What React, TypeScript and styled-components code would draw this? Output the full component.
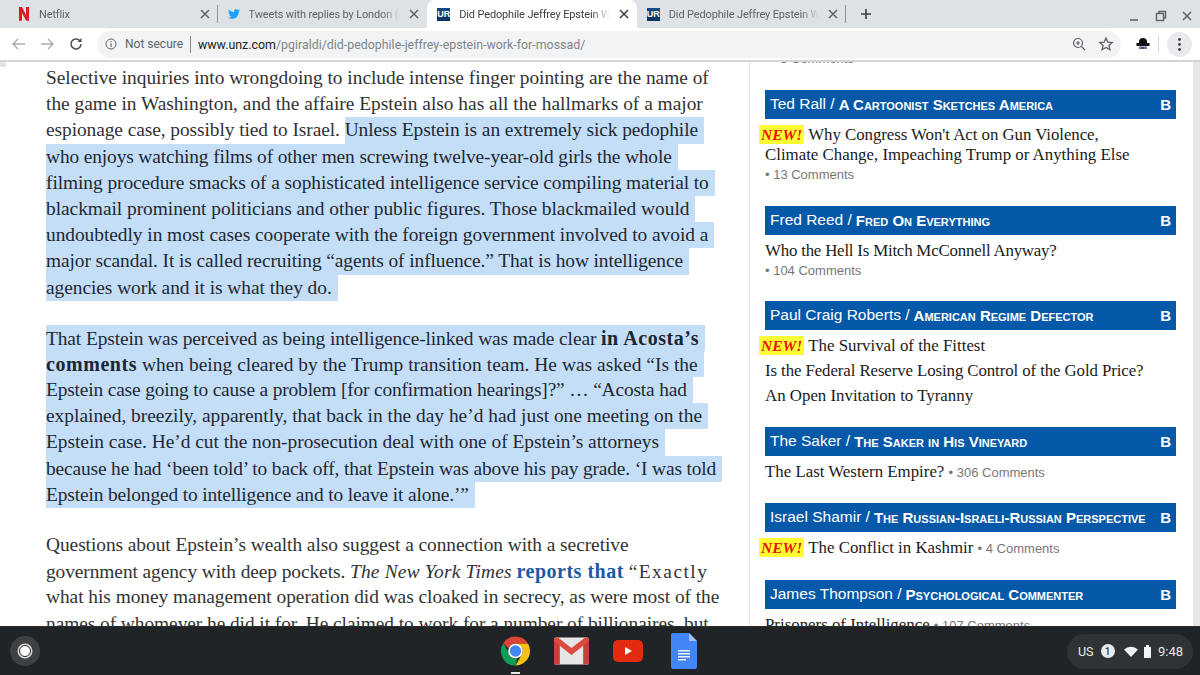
import React from "react";
import styled, { createGlobalStyle } from "styled-components";
import { FaTwitter } from "react-icons/fa";

const Global = createGlobalStyle`
  html, body { margin: 0; padding: 0; width: 1200px; height: 675px; overflow: hidden; background: #fff; }
  * { box-sizing: border-box; }
`;

const Screen = styled.div`
  width: 1200px; height: 675px; display: flex; flex-direction: column; overflow: hidden;
  font-family: Roboto, "Liberation Sans", sans-serif;
`;
const TabStrip = styled.div`
  height: 28px; flex: none; background: #dee1e6; display: flex; align-items: center; padding-left: 8px;
`;
const Tab = styled.div<{ $active?: boolean; $divider?: boolean }>`
  width: 209.6px; height: 28px; display: flex; align-items: center; padding: 0 8px 0 10px; gap: 9px;
  position: relative; flex: none;
  background: ${p => (p.$active ? "#fff" : "transparent")};
  border-radius: ${p => (p.$active ? "8px 8px 0 0" : "0")};
  color: ${p => (p.$active ? "#3c4043" : "#5f6368")};
  ${p => p.$divider && `&::after { content: ""; position: absolute; right: 0; top: 5px; width: 1px; height: 18px; background: #8f9498; }`}
`;
const TabTitle = styled.span`
  flex: 1; min-width: 0; font-size: 11px; white-space: nowrap; overflow: hidden; letter-spacing: -0.14px;
  -webkit-mask-image: linear-gradient(to right, #000 88%, transparent 100%);
  mask-image: linear-gradient(to right, #000 88%, transparent 100%);
`;
const Favicon = styled.span`
  width: 12px; height: 14px; flex: none; display: flex; align-items: center; justify-content: center;
`;
const UrIcon = styled.span`
  width: 13px; height: 13px; flex: none; background: linear-gradient(#144c86, #0c3560); color: #fff;
  font: bold 9px "Liberation Sans", sans-serif; display: flex; align-items: center; justify-content: center;
`;
const NewTab = styled.span`
  margin-left: 14px; display: flex;
`;
const WindowControls = styled.div`
  margin-left: auto; display: flex; align-items: center; gap: 15px; padding: 4px 8px 0 0;
`;
const Toolbar = styled.div`
  height: 34px; flex: none; background: #fff; display: flex; align-items: center; padding: 0 8px 0 11px;
  border-bottom: 2px solid #d3d5d7;
`;
const NavIcon = styled.span<{ $w?: number }>`
  width: ${p => p.$w ?? 29}px; display: flex; flex: none;
`;
const Omnibox = styled.div`
  width: 1024px; height: 27px; border-radius: 14px; background: #f1f3f4; display: flex;
  align-items: center; padding: 0 7px 0 8px; flex: none;
`;
const NotSecure = styled.span`
  margin-left: 8px; font-size: 12px; color: #5f6368; border-right: 1px solid #80868b; line-height: 17px;
  width: 66px; white-space: nowrap;
`;
const Url = styled.span`
  margin-left: 7px; font-size: 12.4px; color: #80868b; white-space: nowrap;
  b { font-weight: 400; color: #202124; }
`;
const OmniEnd = styled.div`
  margin-left: auto; display: flex; gap: 12px; align-items: center;
`;
const ToolEnd = styled.div`
  flex: 1; display: flex; align-items: center; justify-content: flex-end; gap: 8px;
`;
const Separator = styled.span`
  width: 1px; height: 18px; background: #dadce0;
`;
const MenuButton = styled.span`
  width: 25px; height: 25px; border-radius: 50%; background: #e8eaed; display: flex; align-items: center; justify-content: center;
`;
const Page = styled.div`
  flex: 1; min-height: 0; display: flex; overflow: hidden; background: #fff; position: relative;
  &::before { content: ""; position: absolute; left: 0; top: 0; width: 6px; height: 5px; background: #e4e4e4; }
`;
const Article = styled.div`
  width: 750px; flex: none; padding: 3px 0 0 46px; border-right: 1px solid #e3e3e3; overflow: hidden;
  font-family: "Liberation Serif", serif; font-size: 19.4px; color: #333; line-height: 26.2px;
`;
const Paragraph = styled.div`
  margin-bottom: 24px;
`;
const Line = styled.div<{ $ls?: number }>`
  white-space: nowrap; height: 26.2px; letter-spacing: ${p => p.$ls ?? 0}px;
`;
const Sel = styled.span`
  display: inline-block; height: 26.2px; background: #c5def8; color: #1d2833; padding-right: 6px;
`;
const Strong = styled.b`
  color: #1c2630; font-size: 20px; letter-spacing: 0.55px;
`;
const StrongLink = styled(Strong)`
  color: #1a5aa5; letter-spacing: 0.5px;
`;
const Title = styled.em`
  letter-spacing: 0.2px;
`;
const WideWord = styled.span`
  letter-spacing: 1.5px;
`;
const Side = styled.div`
  flex: 1; min-width: 0; padding: 0 17px 0 15px; overflow: hidden; position: relative;
`;
const CutComment = styled.div`
  height: 31px; margin-top: -3px; padding-left: 7px; font: 13px/0px "Liberation Sans", sans-serif; color: #777;
`;
const Section = styled.section<{ $gap?: number }>`
  margin-bottom: ${p => p.$gap ?? 21}px;
`;
const Head = styled.div`
  height: 29px; background: #0559a8; color: #fff; display: flex; align-items: center; padding: 0 5px 1px 5px;
  font: 15.5px "Liberation Sans", sans-serif; white-space: nowrap;
  span { font-weight: 700; font-variant: small-caps; font-size: 15px; margin-left: 4px; }
  b { margin-left: auto; font-size: 15px; }
`;
const Body = styled.div`
  padding-top: 6px;
`;
const Item = styled.div<{ $gap?: boolean; $ls?: number }>`
  font: 16.85px/20px "Liberation Serif", serif; color: #1b1b1b; margin-top: ${p => (p.$gap ? 5 : 0)}px; white-space: nowrap;
  letter-spacing: ${p => p.$ls ?? 0}px;
`;
const NewBadge = styled.i`
  font: italic bold 15.5px/17px "Liberation Serif", serif; background: #ffff33; color: #e8140c; letter-spacing: 0;
  padding: 1px 2px; margin: 0 0 0 -6px; display: inline-block;
`;
const Comments = styled.span`
  font: 13px/20px "Liberation Sans", sans-serif; color: #777;
`;
const CommentRow = styled.div`
  height: 20px; font: 13px/20px "Liberation Sans", sans-serif; color: #777;
`;
const Scrollbar = styled.div`
  width: 7px; flex: none; background: #e7e7e7;
`;
const Shelf = styled.div`
  height: 49px; flex: none; background: #202426; display: flex; align-items: center; position: relative; padding: 0 7px 0 10px;
  border-top: 1px solid #2a2d2f;
`;
const Launcher = styled.div`
  width: 30px; height: 30px; border-radius: 50%; background: #3d4144; display: flex; align-items: center; justify-content: center;
`;
const LauncherDot = styled.span`
  width: 12px; height: 12px; border-radius: 50%; background: #fff; border: 1px solid #202426; box-shadow: 0 0 0 1.5px #ddd;
`;
const Apps = styled.div`
  margin-left: 458px; display: flex; gap: 21px; align-items: center;
`;
const AppSlot = styled.div<{ $active?: boolean }>`
  width: 35px; height: 36px; display: flex; align-items: center; justify-content: center; position: relative;
  ${p => p.$active && `&::after { content: ""; position: absolute; left: 13px; bottom: -5px; width: 9px; height: 2px; background: #e8e8e8; }`}
`;
const Status = styled.div`
  margin-left: auto; width: 126px; height: 35px; border-radius: 18px; background: #2f3336; color: #e8eaed; display: flex; align-items: center;
  padding: 0 10px 0 11px; font-size: 12.5px;
`;
const Badge = styled.span`
  width: 14px; height: 14px; border-radius: 50%; background: #e8eaed; color: #32373a; font-size: 10px; font-weight: 500;
  display: flex; align-items: center; justify-content: center; margin: 0 9px 0 7px;
`;
const Clock = styled.span`
  margin-left: auto; font-size: 13px;
`;

const X = ({ c = "#5f6368" }: { c?: string }) => (
  <svg width="10" height="10" viewBox="0 0 10 10" style={{ flex: "none" }}><path d="M1 1l8 8M9 1l-8 8" stroke={c} strokeWidth="1.5" /></svg>
);

const art1: [string, number][] = [
  ["Selective inquiries into wrongdoing to include intense finger pointing are the name of", -0.02],
  ["the game in Washington, and the affaire Epstein also has all the hallmarks of a major", 0],
];
const sel1: [string, number][] = [
  ["who enjoys watching films of other men screwing twelve-year-old girls the whole", -0.125],
  ["filming procedure smacks of a sophisticated intelligence service compiling material to", -0.07],
  ["blackmail prominent politicians and other public figures. Those blackmailed would", -0.03],
  ["undoubtedly in most cases cooperate with the foreign government involved to avoid a", -0.04],
  ["major scandal. It is called recruiting “agents of influence.” That is how intelligence", -0.09],
  ["agencies work and it is what they do.", -0.05],
];
const sel2: [string, number][] = [
  ["Epstein case going to cause a problem [for confirmation hearings]?” … “Acosta had", -0.16],
  ["explained, breezily, apparently, that back in the day he’d had just one meeting on the", 0],
  ["Epstein case. He’d cut the non-prosecution deal with one of Epstein’s attorneys", -0.025],
  ["because he had ‘been told’ to back off, that Epstein was above his pay grade. ‘I was told", -0.14],
  ["Epstein belonged to intelligence and to leave it alone.’”", -0.13],
];

export default function App() {
  return (
    <Screen>
      <Global />
      <TabStrip>
        <Tab $divider>
          <Favicon>
            <svg width="10" height="14" viewBox="0 0 10 14"><path d="M0 0h3l4 8V0h3v14l-3-.4L3 6v7.6L0 14z" fill="#d81f26" /></svg>
          </Favicon>
          <TabTitle>Netflix</TabTitle>
          <X />
        </Tab>
        <Tab>
          <Favicon><FaTwitter size={12} color="#1da1f2" /></Favicon>
          <TabTitle>Tweets with replies by London (@</TabTitle>
          <X />
        </Tab>
        <Tab $active>
          <UrIcon>UR</UrIcon>
          <TabTitle>Did Pedophile Jeffrey Epstein Work</TabTitle>
          <X c="#3c4043" />
        </Tab>
        <Tab $divider>
          <UrIcon>UR</UrIcon>
          <TabTitle>Did Pedophile Jeffrey Epstein Work</TabTitle>
          <X />
        </Tab>
        <NewTab>
          <svg width="12" height="12" viewBox="0 0 12 12"><path d="M6 1v10M1 6h10" stroke="#3c4043" strokeWidth="1.6" /></svg>
        </NewTab>
        <WindowControls>
          <svg width="12" height="12" viewBox="0 0 12 12"><path d="M2 10h8" stroke="#5f6368" strokeWidth="1.6" /></svg>
          <svg width="12" height="12" viewBox="0 0 12 12" fill="none" stroke="#5f6368" strokeWidth="1.4"><path d="M4 3V1.5h6.5V8H9" /><rect x="1.5" y="3.5" width="7" height="7" /></svg>
          <X />
        </WindowControls>
      </TabStrip>
      <Toolbar>
        <NavIcon>
          <svg width="15" height="14" viewBox="0 0 15 14" fill="none" stroke="#a9acb0" strokeWidth="1.4"><path d="M14 7H2M7 2L2 7l5 5" /></svg>
        </NavIcon>
        <NavIcon>
          <svg width="15" height="14" viewBox="0 0 15 14" fill="none" stroke="#a9acb0" strokeWidth="1.4"><path d="M1 7h12M8 2l5 5-5 5" /></svg>
        </NavIcon>
        <NavIcon $w={28}>
          <svg width="14" height="14" viewBox="0 0 14 14" fill="none" stroke="#4a4d51" strokeWidth="1.5"><path d="M12 7a5 5 0 1 1-1.5-3.6" /><path d="M12.5 1v4h-4" fill="#4a4d51" stroke="none" /></svg>
        </NavIcon>
        <Omnibox>
          <svg width="12" height="12" viewBox="0 0 12 12" fill="none" stroke="#5f6368"><circle cx="6" cy="6" r="5" /><path d="M6 5.2V9M6 3v1.2" strokeWidth="1.1" /></svg>
          <NotSecure>Not secure</NotSecure>
          <Url><b>www.unz.com</b>/pgiraldi/did-pedophile-jeffrey-epstein-work-for-mossad/</Url>
          <OmniEnd>
            <svg width="14" height="14" viewBox="0 0 14 14" fill="none" stroke="#5f6368" strokeWidth="1.2"><circle cx="6" cy="6" r="4.5" /><path d="M9.3 9.3L13 13M4 6h4M6 4v4" /></svg>
            <svg width="16" height="16" viewBox="0 0 16 16" fill="none" stroke="#5f6368" strokeWidth="1.3"><path d="M8 2l1.8 4.1 4.4.4-3.3 2.9 1 4.3L8 11.5l-3.9 2.2 1-4.3L1.8 6.5l4.4-.4z" /></svg>
          </OmniEnd>
        </Omnibox>
        <ToolEnd>
          <svg width="14" height="14" viewBox="0 0 14 14"><path d="M3 5a4 4 0 0 1 8 0v1h2.5v3H.5V6H3z" fill="#111" /><rect x="3" y="9.500" width="8" height="2.500" fill="#777" /><rect x="5" y="10" width="3" height="2" fill="#3a49c0" /></svg>
          <Separator />
          <MenuButton>
            <svg width="3" height="13" viewBox="0 0 3 13" fill="#3c4043"><circle cx="1.5" cy="1.5" r="1.4" /><circle cx="1.5" cy="6.5" r="1.4" /><circle cx="1.5" cy="11.5" r="1.4" /></svg>
          </MenuButton>
        </ToolEnd>
      </Toolbar>
      <Page>
        <Article>
          <Paragraph>
            {art1.map(([t, ls]) => <Line key={t} $ls={ls}>{t}</Line>)}
            <Line $ls={-0.07}>espionage case, possibly tied to Israel. <Sel>Unless Epstein is an extremely sick pedophile</Sel></Line>
            {sel1.map(([t, ls]) => <Line key={t} $ls={ls}><Sel>{t}</Sel></Line>)}
          </Paragraph>
          <Paragraph>
            <Line $ls={-0.1}><Sel>That Epstein was perceived as being intelligence-linked was made clear <Strong>in Acosta’s</Strong></Sel></Line>
            <Line $ls={0.04}><Sel><Strong>comments</Strong> when being cleared by the Trump transition team. He was asked “Is the</Sel></Line>
            {sel2.map(([t, ls]) => <Line key={t} $ls={ls}><Sel>{t}</Sel></Line>)}
          </Paragraph>
          <Paragraph>
            <Line $ls={-0.06}>Questions about Epstein’s wealth also suggest a connection with a secretive</Line>
            <Line $ls={-0.08}>government agency with deep pockets. <Title>The New York Times</Title> <StrongLink>reports that</StrongLink> <WideWord>“Exactly</WideWord></Line>
            <Line $ls={-0.04}>what his money management operation did was cloaked in secrecy, as were most of the</Line>
            <Line $ls={-0.06}>names of whomever he did it for. He claimed to work for a number of billionaires, but</Line>
          </Paragraph>
        </Article>
        <Side>
          <CutComment>• 3 Comments</CutComment>
          <Section>
            <Head>Ted Rall /<span>A Cartoonist Sketches America</span><b>B</b></Head>
            <Body>
              <Item $ls={-0.05}><NewBadge>NEW!</NewBadge> Why Congress Won't Act on Gun Violence,</Item>
              <Item>Climate Change, Impeaching Trump or Anything Else</Item>
              <CommentRow>• 13 Comments</CommentRow>
            </Body>
          </Section>
          <Section $gap={20}>
            <Head>Fred Reed /<span>Fred On Everything</span><b>B</b></Head>
            <Body>
              <Item $ls={-0.2}>Who the Hell Is Mitch McConnell Anyway?</Item>
              <CommentRow>• 104 Comments</CommentRow>
            </Body>
          </Section>
          <Section>
            <Head>Paul Craig Roberts /<span>American Regime Defector</span><b>B</b></Head>
            <Body>
              <Item><NewBadge>NEW!</NewBadge> The Survival of the Fittest</Item>
              <Item $gap $ls={-0.1}>Is the Federal Reserve Losing Control of the Gold Price?</Item>
              <Item $gap>An Open Invitation to Tyranny</Item>
            </Body>
          </Section>
          <Section $gap={20}>
            <Head>The Saker /<span>The Saker in His Vineyard</span><b>B</b></Head>
            <Body>
              <Item>The Last Western Empire? <Comments>• 306 Comments</Comments></Item>
            </Body>
          </Section>
          <Section>
            <Head>Israel Shamir /<span>The Russian-Israeli-Russian Perspective</span><b>B</b></Head>
            <Body>
              <Item><NewBadge>NEW!</NewBadge> The Conflict in Kashmir <Comments>• 4 Comments</Comments></Item>
            </Body>
          </Section>
          <Section>
            <Head>James Thompson /<span>Psychological Commenter</span><b>B</b></Head>
            <Body>
              <Item>Prisoners of Intelligence <Comments>• 107 Comments</Comments></Item>
            </Body>
          </Section>
        </Side>
        <Scrollbar />
      </Page>
      <Shelf>
        <Launcher><LauncherDot /></Launcher>
        <Apps>
          <AppSlot $active>
            <svg width="36" height="36" viewBox="0 0 48 48">
              <path d="M24 4a20 20 0 0 1 17.3 10H24a10 10 0 0 0-9.5 6.9L7.3 13A20 20 0 0 1 24 4z" fill="#db4437" />
              <path d="M41.3 14A20 20 0 0 1 24 44l8.6-15A10 10 0 0 0 32.5 19L24 14z" fill="#f4c20d" />
              <path d="M24 44A20 20 0 0 1 7.3 13l8.7 15.500a10 10 0 0 0 10.600 5.200z" fill="#0f9d58" />
              <circle cx="24" cy="24" r="10" fill="#fff" />
              <circle cx="24" cy="24" r="7.8" fill="#4285f4" />
            </svg>
          </AppSlot>
          <AppSlot>
            <svg width="36" height="28" viewBox="0 0 36 28">
              <rect width="36" height="28" rx="2" fill="#e6e6e6" />
              <path d="M0 2l6 5v21H2a2 2 0 0 1-2-2zM36 2l-6 5v21h4a2 2 0 0 0 2-2z" fill="#c5403a" />
              <path d="M0 2a2 2 0 0 1 2-2h2l14 11L32 0h2a2 2 0 0 1 2 2v2L18 18 0 4z" fill="#dd4b40" />
            </svg>
          </AppSlot>
          <AppSlot>
            <svg width="30" height="22" viewBox="0 0 30 22"><rect width="30" height="22" rx="5" fill="#e32b12" /><path d="M12 7l7 4-7 4z" fill="#fff" /></svg>
          </AppSlot>
          <AppSlot>
            <svg width="26" height="36" viewBox="0 0 26 36">
              <path d="M2 0h16l8 8v26a2 2 0 0 1-2 2H2a2 2 0 0 1-2-2V2a2 2 0 0 1 2-2z" fill="#4285f4" />
              <path d="M18 0l8 8h-8z" fill="#a1c2fa" />
              <path d="M7 17h12v1.400H7zM7 20h12v1.400H7zM7 23h12v1.400H7zM7 26h8v1.400H7z" fill="#f1f1f1" />
            </svg>
          </AppSlot>
        </Apps>
        <Status>
          US
          <Badge>1</Badge>
          <svg width="14" height="11" viewBox="0 0 14 11"><path d="M0 3.500a10 10 0 0 1 14 0L7 11z" fill="#f1f3f4" /></svg>
          <svg width="9" height="13" viewBox="0 0 9 13" style={{ marginLeft: 5 }}><path d="M3 0h3v2h2v11H1V2h2z" fill="#f1f3f4" /></svg>
          <Clock>9:48</Clock>
        </Status>
      </Shelf>
    </Screen>
  );
}
